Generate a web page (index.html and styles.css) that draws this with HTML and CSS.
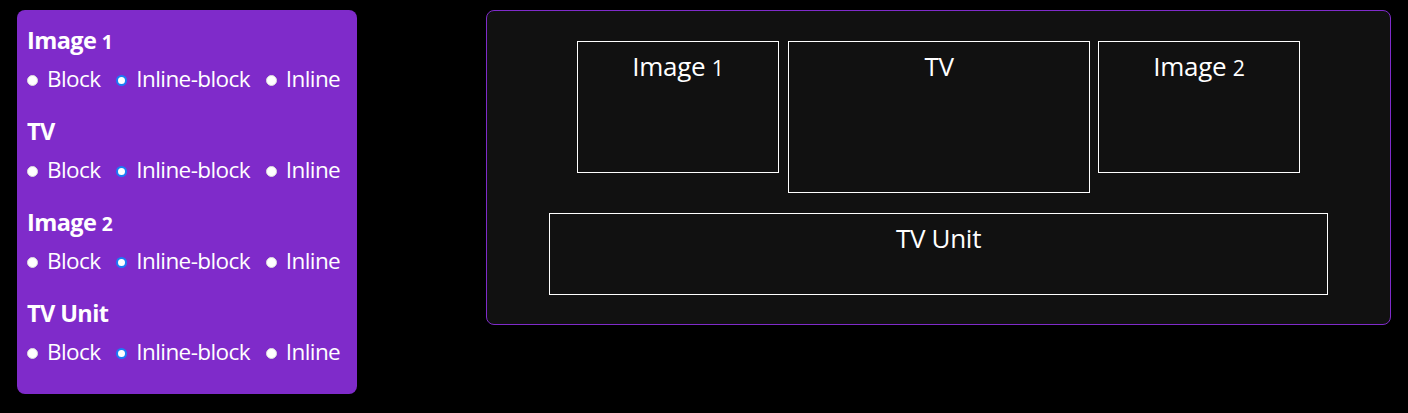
FILE: index.html
```html
<!DOCTYPE html>
<html>
<head>
<meta charset="utf-8">
<link rel="stylesheet" href="styles.css">
</head>
<body>
<div class="page">
  <div class="controls">
    <div class="group">
      <div class="title">Image <span class="num">1</span></div>
      <div class="opts">
        <span class="opt"><span class="radio"></span>Block</span>
        <span class="opt"><span class="radio on"></span>Inline-block</span>
        <span class="opt"><span class="radio"></span>Inline</span>
      </div>
    </div>
    <div class="group">
      <div class="title">TV</div>
      <div class="opts">
        <span class="opt"><span class="radio"></span>Block</span>
        <span class="opt"><span class="radio on"></span>Inline-block</span>
        <span class="opt"><span class="radio"></span>Inline</span>
      </div>
    </div>
    <div class="group">
      <div class="title">Image <span class="num">2</span></div>
      <div class="opts">
        <span class="opt"><span class="radio"></span>Block</span>
        <span class="opt"><span class="radio on"></span>Inline-block</span>
        <span class="opt"><span class="radio"></span>Inline</span>
      </div>
    </div>
    <div class="group">
      <div class="title">TV Unit</div>
      <div class="opts">
        <span class="opt"><span class="radio"></span>Block</span>
        <span class="opt"><span class="radio on"></span>Inline-block</span>
        <span class="opt"><span class="radio"></span>Inline</span>
      </div>
    </div>
  </div>
  <div class="stage">
    <div class="row">
      <div class="box img">Image <span class="num">1</span></div>
      <div class="box tv">TV</div>
      <div class="box img">Image <span class="num">2</span></div>
    </div>
    <div class="box unit">TV Unit</div>
  </div>
</div>
</body>
</html>
```
FILE: styles.css
```css
html, body {
  margin: 0;
  background: #000;
}
body {
  font-family: "Open Sans", "Noto Sans", sans-serif;
  color: #fff;
}
.page {
  display: flex;
  align-items: flex-start;
  gap: 129px;
  padding: 10px 17px;
}
.controls {
  width: 340px;
  height: 384px;
  box-sizing: border-box;
  background: #7f2bca;
  border-radius: 8px;
  padding: 15px 10px 0;
  display: flex;
  flex-direction: column;
  gap: 22px;
}
.group {
  display: flex;
  flex-direction: column;
  gap: 9px;
}
.title {
  font-size: 23.5px;
  font-weight: 700;
  line-height: 30px;
  letter-spacing: -0.6px;
  height: 30px;
}
.num {
  font-size: 0.82em;
}
.opts {
  display: flex;
  gap: 16px;
  font-size: 22.5px;
  line-height: 30px;
  letter-spacing: -0.6px;
}
.opt {
  display: flex;
  align-items: center;
  gap: 9px;
}
.radio {
  width: 11px;
  height: 11px;
  border-radius: 50%;
  background: #fff;
  box-sizing: border-box;
  border: 1px solid #ddd;
  margin-top: 2px;
}
.radio.on {
  border: 2px solid #1a7cf5;
  background: #fff;
}
.stage {
  width: 905px;
  height: 315px;
  box-sizing: border-box;
  background: #111;
  border: 1px solid #7f2bca;
  border-radius: 8px;
  padding-top: 30px;
  display: flex;
  flex-direction: column;
  align-items: center;
  gap: 20px;
}
.row {
  display: flex;
  align-items: flex-start;
  gap: 9px;
}
.box {
  border: 1px solid #fff;
  text-align: center;
  font-size: 26px;
  line-height: 48px;
  letter-spacing: -0.3px;
}
.img {
  width: 200px;
  height: 130px;
}
.tv {
  width: 300px;
  height: 150px;
  margin-right: -1px;
}
.unit {
  width: 777px;
  height: 80px;
}
```
